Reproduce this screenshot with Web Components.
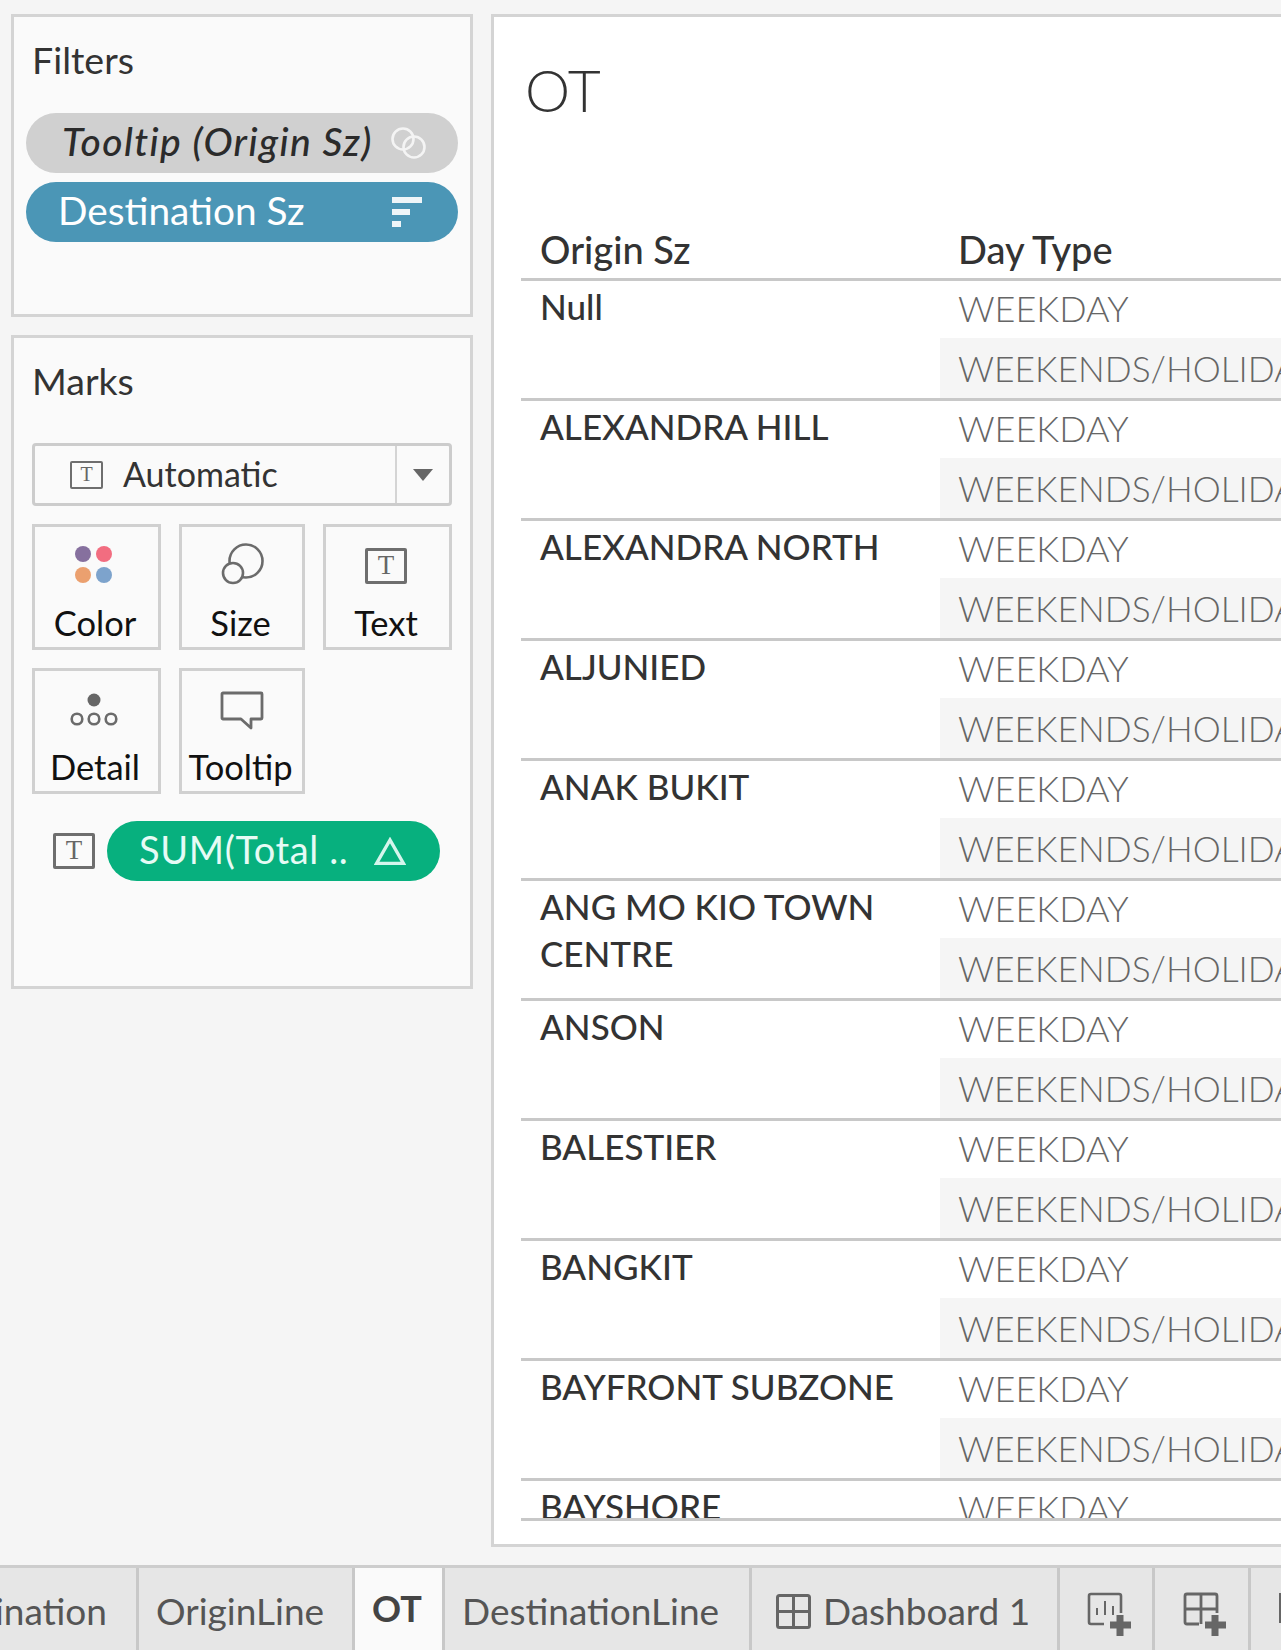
<!DOCTYPE html>
<html>
<head>
<meta charset="utf-8">
<style>
  html, body { margin: 0; height: 1650px; overflow: hidden; background: #f5f5f5; }
  body { font-family: Lato, "Liberation Sans", sans-serif; }
</style>
</head>
<body>
<wb-app></wb-app>

<script>
// small text-in-a-box icon, used three times in the marks card
class TBox extends HTMLElement {
  constructor() {
    super();
    this.attachShadow({ mode: 'open' }).innerHTML = `
    <style>
      :host { display: inline-flex; box-sizing: border-box; align-items: center; justify-content: center;
        width: var(--w, 42px); height: var(--h, 36px); border: 3px solid #6e6e6e; border-radius: 2px;
        font: 26px/1 "Liberation Serif", serif; color: #666; }
      span { display: block; margin-top: -2px; font-size: var(--t, 27px); }
    </style><span>T</span>`;
  }
}
customElements.define('t-box', TBox);

class SidePanel extends HTMLElement {
  constructor() {
    super();
    this.attachShadow({ mode: 'open' }).innerHTML = `
    <style>
      :host { display: block; box-sizing: border-box; border: 3px solid #d4d4d4; background: #fafafa;
        height: var(--panel-h); padding: 21px 0 0 18px; }
      h2 { margin: 0; font-size: 37.5px; font-weight: 400; line-height: 44px; color: #333; }
    </style>
    <h2>${this.getAttribute('title-text')}</h2>
    <slot></slot>`;
  }
}
customElements.define('side-panel', SidePanel);

class FieldPill extends HTMLElement {
  constructor() {
    super();
    this.attachShadow({ mode: 'open' }).innerHTML = `
    <style>
      :host { display: flex; box-sizing: border-box; align-items: center; justify-content: space-between;
        height: 60px; border-radius: 30px; background: var(--bg); color: var(--fg);
        padding: var(--pad); font-size: var(--fz, 39px); letter-spacing: var(--ls, 0); font-weight: var(--fw, 400);
        white-space: nowrap; font-style: var(--fs, normal); }
      span { display: block; line-height: 44px; margin-top: -4px; }
      ::slotted(svg) { display: block; }
    </style>
    <span>${this.getAttribute('label')}</span><slot></slot>`;
  }
}
customElements.define('field-pill', FieldPill);

class MarkCard extends HTMLElement {
  constructor() {
    super();
    this.attachShadow({ mode: 'open' }).innerHTML = `
    <style>
      :host { display: flex; flex-direction: column; align-items: center; box-sizing: border-box;
        height: 126px; border: 3px solid #d0d0d0; color: #111; font-size: 34.5px; }
      .ic { height: 57px; width: 100%; flex: none; display: flex; align-items: flex-end; justify-content: center; }
      span { line-height: 40px; margin-top: 19px; white-space: nowrap; margin-right: 3px; }
    </style>
    <div class="ic"><slot></slot></div>
    <span>${this.getAttribute('label')}</span>`;
  }
}
customElements.define('mark-card', MarkCard);

class DataRow extends HTMLElement {
  constructor() {
    super();
    this.attachShadow({ mode: 'open' }).innerHTML = `
    <style>
      :host { display: grid; grid-template-columns: 419px 1fr; box-sizing: border-box; height: 120px;
        border-top: 3px solid #c8c8c8; font-size: 35px; }
      .name { padding: 2px 0 0 19px; font-weight: 500; color: #333; line-height: 47px; }
      .days { color: #666; font-weight: 300; font-size: 36px; white-space: nowrap; }
      .days div { height: 57px; line-height: 54px; padding-left: 18px; box-sizing: border-box; }
      .days div + div { height: 60px; line-height: 60px; background: #f5f5f5; padding-top: 1px; font-size: 35.4px; }
    </style>
    <div class="name">${this.getAttribute('name')}</div>
    <div class="days"><div>WEEKDAY</div><div>WEEKENDS/HOLIDAYS</div></div>`;
  }
}
customElements.define('data-row', DataRow);

class OtTable extends HTMLElement {
  constructor() {
    super();
    const names = ['Null', 'ALEXANDRA HILL', 'ALEXANDRA NORTH', 'ALJUNIED', 'ANAK BUKIT',
      'ANG MO KIO TOWN CENTRE', 'ANSON', 'BALESTIER', 'BANGKIT', 'BAYFRONT SUBZONE', 'BAYSHORE'];
    this.attachShadow({ mode: 'open' }).innerHTML = `
    <style>
      :host { display: block; }
      .head { display: grid; grid-template-columns: 419px 1fr; height: 54px; font-size: 38px; font-weight: 500;
        color: #333; line-height: 44px; }
      .head div { padding-left: 19px; padding-top: 3px; }
      .head div + div { padding-left: 18px; }
      .body { box-sizing: border-box; height: 1243px; overflow: hidden; border-bottom: 3px solid #c8c8c8; }
    </style>
    <div class="head"><div>Origin Sz</div><div>Day Type</div></div>
    <div class="body">${names.map(n => `<data-row name="${n}"></data-row>`).join('')}</div>`;
  }
}
customElements.define('ot-table', OtTable);

class SheetTab extends HTMLElement {
  constructor() {
    super();
    this.attachShadow({ mode: 'open' }).innerHTML = `
    <style>
      :host { display: flex; flex: none; box-sizing: border-box; border-right: 3px solid #c8c8c8; overflow: hidden;
        height: 82px; padding: 21px 0 0 17px; font-size: 37px; line-height: 44px; color: #555; white-space: nowrap; }
      :host([active]) { background: #fafafa; font-weight: 700; color: #444; padding-top: 18px; font-size: 36px; }
      :host([clip]) { justify-content: flex-end; padding: 21px 29px 0 0; }
      :host([center]) { padding: 0; align-items: flex-start; justify-content: flex-start; }
      ::slotted(svg) { flex: none; }
    </style>
    <slot></slot>`;
  }
}
customElements.define('sheet-tab', SheetTab);

class TabBar extends HTMLElement {
  constructor() {
    super();
    this.attachShadow({ mode: 'open' }).innerHTML = `
    <style>
      :host { display: flex; box-sizing: border-box; height: 85px; border-top: 3px solid #cdcdcd; background: #e6e6e6; overflow: hidden; }
    </style>
    <slot></slot>`;
  }
}
customElements.define('tab-bar', TabBar);

class WbApp extends HTMLElement {
  constructor() {
    super();
    this.attachShadow({ mode: 'open' }).innerHTML = `
    <style>
      :host { display: block; width: 1281px; height: 1650px; overflow: hidden; }
      .work { display: flex; height: 1565px; box-sizing: border-box; padding: 14px 0 18px 11px; gap: 18px; }
      .side { flex: none; width: 462px; display: flex; flex-direction: column; gap: 18px; }
      .pills { display: flex; flex-direction: column; gap: 9px; margin: 31px 0 0 -6px; width: 432px; }
      .dd { box-sizing: border-box; display: flex; align-items: center; width: 420px; height: 63px; margin: 40px 0 0 0;
        border: 3px solid #ccc; border-radius: 4px; font-size: 34px; color: #333; }
      .dd t-box { --w: 33px; --h: 28px; --t: 20px; margin-left: 35px; border-width: 2px; }
      .dd span { margin-left: 20px; margin-top: -3px; flex: 1; }
      .dd i { display: flex; align-items: center; justify-content: center; width: 52px; height: 100%; border-left: 2px solid #d4d4d4; }
      .dd i::after { content: ""; border: 10px solid transparent; border-top: 12px solid #666; border-bottom: 0; }
      .cards { display: grid; grid-template-columns: 129px 126px 129px; grid-auto-rows: 126px; gap: 18px; margin-top: 18px; }
      .enc { display: flex; align-items: center; margin: 27px 0 0 21px; gap: 12px; }
      .enc field-pill { width: 333px; }
      .main { flex: none; width: 1000px; box-sizing: border-box; background: #fff; border: 3px solid #d4d4d4; padding: 0 0 0 27px; }
      h1 { margin: 0; height: 207px; padding: 37px 0 0 4px; box-sizing: border-box; font-size: 57px; font-weight: 300; line-height: 72px; color: #333; }
    </style>
    <div class="work">
      <div class="side">
        <side-panel title-text="Filters" style="--panel-h:303px">
          <div class="pills">
            <field-pill label="Tooltip (Origin Sz)" style="--bg:#d0d0d0;--fg:#2b2b2b;--fs:italic;--fw:500;--ls:1.4px;--pad:0 29px 0 36px">
              <svg width="40" height="36" viewBox="0 0 40 36" fill="none" stroke="#f4f4f4" stroke-width="2.6"><circle cx="14" cy="14" r="10.5"/><circle cx="25" cy="22" r="10.5"/></svg>
            </field-pill>
            <field-pill label="Destination Sz" style="--bg:#4b96b6;--fg:#fff;--fz:38.8px;--pad:0 36px 0 32px">
              <svg width="30" height="30" viewBox="0 0 30 30" fill="#eef5f8"><rect width="30" height="6"/><rect y="12" width="18" height="6"/><rect y="24" width="9" height="6"/></svg>
            </field-pill>
          </div>
        </side-panel>
        <side-panel title-text="Marks" style="--panel-h:654px">
          <div>
            <div class="dd"><t-box></t-box><span>Automatic</span><i></i></div>
            <div class="cards">
              <mark-card label="Color">
                <svg width="40" height="40" viewBox="0 0 40 40" style="margin:0 5px -1px 0"><circle cx="9" cy="9" r="8" fill="#86709e"/><circle cx="30" cy="9" r="8" fill="#f26d80"/><circle cx="9" cy="30" r="8" fill="#eba06f"/><circle cx="30" cy="30" r="8" fill="#7da3cc"/></svg>
              </mark-card>
              <mark-card label="Size">
                <svg width="44" height="44" viewBox="0 0 44 44" fill="none" stroke="#6b6b6b" stroke-width="2.6" style="margin-bottom:-3px"><circle cx="26" cy="18" r="16.5"/><circle cx="13" cy="30" r="10" fill="#fafafa"/></svg>
              </mark-card>
              <mark-card label="Text"><t-box style="margin-right:3px"></t-box></mark-card>
              <mark-card label="Detail">
                <svg width="48" height="33" viewBox="0 0 48 33" fill="none" stroke="#6b6b6b" stroke-width="2.6" style="margin:0 6px 2px 0"><circle cx="24" cy="7" r="6.5" fill="#666" stroke="none"/><circle cx="7" cy="26" r="5.3"/><circle cx="24" cy="26" r="5.3"/><circle cx="41" cy="26" r="5.3"/></svg>
              </mark-card>
              <mark-card label="Tooltip">
                <svg width="44" height="40" viewBox="0 0 44 40" fill="none" stroke="#6b6b6b" stroke-width="2.8" stroke-linejoin="round" style="margin-bottom:-3px"><path d="M3 2h38a1 1 0 0 1 1 1v24a1 1 0 0 1-1 1H31v9L21 28H3a1 1 0 0 1-1-1V3a1 1 0 0 1 1-1z"/></svg>
              </mark-card>
            </div>
            <div class="enc">
              <t-box></t-box>
              <field-pill label="SUM(Total .." style="--bg:#07b07e;--fg:#e6fbf5;--fz:38px;--ls:.6px;--pad:0 34px 0 32px">
                <svg width="32" height="28" viewBox="0 0 32 28" fill="none" stroke="#d5f5ec" stroke-width="3.4"><path d="M16 3L2.5 26.5h27z"/></svg>
              </field-pill>
            </div>
          </div>
        </side-panel>
      </div>
      <div class="main">
        <h1>OT</h1>
        <ot-table></ot-table>
      </div>
    </div>
    <tab-bar>
      <sheet-tab clip style="width:139px">OriginDestination</sheet-tab>
      <sheet-tab style="width:216px">OriginLine</sheet-tab>
      <sheet-tab active style="width:90px">OT</sheet-tab>
      <sheet-tab style="width:307px">DestinationLine</sheet-tab>
      <sheet-tab style="width:308px;padding-left:24px">
        <svg width="35" height="35" viewBox="0 0 35 35" fill="none" stroke="#666" stroke-width="3" style="margin:5px 12px 0 0"><rect x="1.5" y="1.5" width="32" height="32" rx="2"/><path d="M17.5 1.5v32M1.5 17.5h32"/></svg>Dashboard 1
      </sheet-tab>
      <sheet-tab center style="width:95px">
        <svg width="92" height="82" viewBox="0 0 92 82" fill="none" stroke="#666"><path d="M44 56H31a2 2 0 0 1-2-2V28a2 2 0 0 1 2-2h28a2 2 0 0 1 2 2v17" stroke-width="2.6"/><path d="M37 47v-7M45 47V33M53 47v-9" stroke-width="2"/><path d="M60 47v21M50 57h21" stroke-width="7"/></svg>
      </sheet-tab>
      <sheet-tab center style="width:96px">
        <svg width="92" height="82" viewBox="0 0 92 82" fill="none" stroke="#666"><path d="M44 56H32a2 2 0 0 1-2-2V28a2 2 0 0 1 2-2h28a2 2 0 0 1 2 2v17" stroke-width="2.8"/><path d="M46 26v30M30 41h32" stroke-width="2.8"/><path d="M60 47v21M50 57h21" stroke-width="7"/></svg>
      </sheet-tab>
      <sheet-tab center style="width:31px;border-right:0">
        <svg width="31" height="82" viewBox="0 0 31 82" fill="none" stroke="#666" stroke-width="3"><path d="M29.5 25v30"/></svg>
      </sheet-tab>
    </tab-bar>`;
  }
}
customElements.define('wb-app', WbApp);
</script>
</body>
</html>
